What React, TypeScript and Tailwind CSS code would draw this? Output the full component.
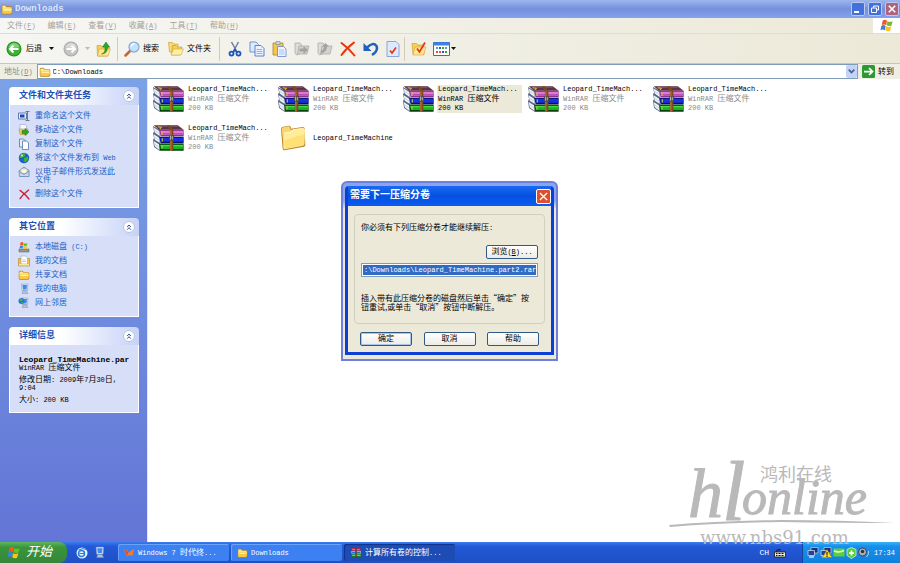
import React, { ReactNode } from 'react';

const LATIN = /([\x20-\x7e]+)/;

/** Mixed-script label: Latin runs are set one pixel smaller than the Han runs. */
function Mix({ text }: { text: string }) {
  return (
    <>
      {text.split(LATIN).map((part, i) =>
        i % 2 ? (
          <span key={i} className="text-[7px]">
            {part}
          </span>
        ) : (
          part
        ),
      )}
    </>
  );
}

function Key({ text, letter }: { text: string; letter: string }) {
  return (
    <>
      {text}
      <span className="text-[7px]">
        (<u>{letter}</u>)
      </span>
    </>
  );
}

function Svg({ box, className, children }: { box: string; className: string; children: ReactNode }) {
  return (
    <svg viewBox={box} className={`block shrink-0 ${className}`} aria-hidden="true" preserveAspectRatio="none">
      {children}
    </svg>
  );
}

function Folder({ className }: { className: string }) {
  return (
    <Svg box="0 0 32 28" className={className}>
      <path d="M2 5 Q2 2 5 2 H12 L16 6 H27 Q30 6 30 9 V24 L27 27 H4 L2 24Z" fill="#b98216" />
      <path d="M3.500 6 Q3.500 4 5 4 H11 L15 8 H28 V23 H4Z" fill="#ffe58e" />
      <path d="M7 12 H30 L26 25 H4Z" fill="#fbc93f" />
      <path d="M8 13 H28 L27 17 H7Z" fill="#ffefa8" />
    </Svg>
  );
}

function BigFolder() {
  return (
    <Svg box="0 0 78 78" className="h-[26px] w-[26px]">
      <path d="M3 12 Q3 6 9 5 L27 2 Q31 2 32 6 L34 11 L68 6 Q74 6 74 11 L76 60 Q76 64 72 65 L14 76 Q9 76 8 71Z" fill="#b9862b" />
      <path d="M5 13 Q5 8 10 7 L26 4 Q29 4 30 8 L32 14 L67 8 Q72 8 72 13 L73 58 L12 70Z" fill="#fbd56c" />
      <path d="M12 24 L34 21 L40 14 L71 11 Q75 11 75 15 L73 57 Q73 61 69 62 L14 73 Q10 73 10 69Z" fill="#ffec96" />
      <path d="M14 46 L73 28 L72 56 Q72 60 68 61 L14 72Z" fill="#ffdb68" opacity="0.7" />
      <path d="M12 24 L34 21 L40 14 L71 11" fill="none" stroke="#fff9d6" strokeWidth="3" />
    </Svg>
  );
}

function Archive({ className }: { className: string }) {
  return (
    <Svg box="0 0 90 76" className={className}>
      <path d="M0 3 L20 14 V76 L3 64 L0 44 L3 38 L0 24 L3 19Z" fill="#5b6680" />
      <path d="M2 7 L19 18 V32 L5 22Z M2 27 L19 38 V52 L5 43Z M2 47 L19 58 V73 L5 62Z" fill="#eef2fa" />
      <path d="M4 15 L19 25 M4 35 L19 45 M4 55 L19 65" stroke="#b9c6da" strokeWidth="2" />
      <path d="M2 1 H72 L89 14 H18Z" fill="#5d3244" />
      <path d="M8 2 H70 L74 5 H14Z" fill="#82576a" />
      <path d="M18 14 H89 V33 H22Z" fill="#7a2a75" />
      <path d="M21 17 H88 V25 H23Z" fill="#e177d8" />
      <path d="M21 25 H88 V30 H23Z" fill="#c255b9" />
      <path d="M18 34 H89 V53 H22Z" fill="#07106a" />
      <path d="M21 37 H88 V49 H23Z" fill="#1632e0" />
      <path d="M18 54 H89 V75 H20Z" fill="#06400c" />
      <path d="M21 58 H88 V70 H23Z" fill="#16b51c" />
      <path d="M21 59 H88 V62 H23Z" fill="#5ce055" />
      <path d="M26 18 V29 M27 39 V48 M26 60 V69" stroke="#d8c63c" strokeWidth="3" />
      <path d="M40 1 H48 L59 14 V75 H49 V14Z" fill="#7e4a1d" />
      <path d="M52 15 V75" stroke="#b98142" strokeWidth="3" />
      <rect x="47" y="29" width="14" height="17" rx="4" fill="#4f4a44" />
      <path d="M51 31 V43 M56 32 V42" stroke="#e8e4d8" strokeWidth="2" />
      <path d="M14 5 L24 7 L20 11" stroke="#d9bb35" strokeWidth="3" fill="none" />
    </Svg>
  );
}

function SmallArchive() {
  return (
    <Svg box="0 0 24 24" className="h-[11px] w-3">
      <path d="M2 2 L18 1 L22 5 V8 H4Z" fill="#a32a5c" />
      <path d="M4 4 L20 5 V7 H5Z" fill="#f06a8a" />
      <path d="M2 9 H22 V14 H3Z" fill="#d9d43a" />
      <path d="M3 11 H21 V13 H4Z" fill="#2d6be0" />
      <path d="M2 15 H22 V22 H3Z" fill="#1b7a34" />
      <path d="M4 17 H21 V19 H5Z" fill="#7de3b0" />
      <path d="M12 1 V22" stroke="#6b3c18" strokeWidth="3" />
    </Svg>
  );
}

function Flag({ className }: { className: string }) {
  return (
    <Svg box="0 0 32 30" className={className}>
      <path d="M6 4 Q11 0 16 4 L14 14 Q9 11 4 14Z" fill="#ee5a24" />
      <path d="M17 5 Q22 8 29 5 L26 15 Q20 18 15 14Z" fill="#6fbd2b" />
      <path d="M3 16 Q8 12 13 16 L11 26 Q6 23 1 26Z" fill="#3a80e6" />
      <path d="M14 17 Q20 20 26 17 L23 27 Q17 30 12 26Z" fill="#fbc31c" />
    </Svg>
  );
}

function Arrow({ tone }: { tone: 'dark' | 'light' }) {
  return (
    <Svg box="0 0 6 4" className="h-[3px] w-[5px]">
      <path d="M0 0 H6 L3 4Z" fill={tone === 'dark' ? '#111' : '#bdbab0'} />
    </Svg>
  );
}

function RoundArrow({ kind }: { kind: 'back' | 'forward' }) {
  const back = kind === 'back';
  return (
    <Svg box="0 0 32 32" className="h-4 w-4">
      <circle cx="16" cy="16" r="15" fill={back ? '#238c1e' : '#a9a9a9'} />
      <circle cx="16" cy="16" r="13" fill={back ? '#3db534' : '#c4c4c4'} />
      <path d="M5 12 Q10 3 16 4 Q23 3 27 12 Q16 16 5 12Z" fill="#fff" opacity="0.35" />
      <path
        d={back ? 'M25 16 H9 M15 9 L8 16 L15 23' : 'M7 16 H23 M17 9 L24 16 L17 23'}
        fill="none"
        stroke="#fff"
        strokeWidth="4"
      />
    </Svg>
  );
}

function Pages({ className }: { className: string }) {
  return (
    <Svg box="0 0 32 32" className={className}>
      <path d="M2 2 H14 L19 7 V22 H2Z" fill="#dfeafd" stroke="#6f93d8" strokeWidth="2" />
      <path d="M12 9 H24 L30 15 V30 H12Z" fill="#eef4ff" stroke="#5a82cf" strokeWidth="2" />
      <path d="M15 17 H26 M15 21 H27 M15 25 H27" stroke="#8fb0ea" strokeWidth="2" />
    </Svg>
  );
}

function GreyFolder({ twin }: { twin?: boolean }) {
  return (
    <Svg box="0 0 32 28" className="h-[14px] w-4">
      <path d="M2 2 H12 L15 6 V22 L5 26 L2 22Z" fill="#dcdcd8" stroke="#a9a9a6" strokeWidth="1.500" />
      <path d="M10 8 H30 L26 24 H7Z" fill="#d2d2ce" stroke="#a9a9a6" strokeWidth="1.500" />
      <path d={twin ? 'M8 17 Q14 15 14 9 H10 L17 2 L24 9 H20 Q20 20 8 23Z' : 'M11 13 H19 V8 L28 16 L19 24 V19 H11Z'} fill="#a3a3a0" />
    </Svg>
  );
}

function Cross({ color, className }: { color: string; className: string }) {
  return (
    <Svg box="0 0 32 32" className={className}>
      <path d="M3 4 Q17 14 29 29 M28 3 Q12 15 3 28" fill="none" stroke={color} strokeWidth="4" strokeLinecap="round" />
    </Svg>
  );
}

function Screen({ className, globe }: { className: string; globe?: boolean }) {
  return (
    <Svg box="0 0 24 24" className={className}>
      <path d="M7 2 H20 L19 15 H8Z" fill="#dbe5f5" stroke="#7d8fb5" />
      <path d="M9 4 H18 L17 13 H10Z" fill="#3c8cf0" />
      <path d="M10 16 H17 L20 21 H8Z" fill="#b9c4da" stroke="#7d8fb5" />
      {globe && (
        <>
          <circle cx="7" cy="8" r="6" fill="#2d74d8" />
          <path d="M3 4 Q7 2 10 5 L7 9 L4 8Z M7 11 L11 9 L8 14Z" fill="#45b545" />
        </>
      )}
    </Svg>
  );
}

function NetworkTray({ warning }: { warning?: boolean }) {
  return (
    <Svg box="0 0 24 22" className="h-[11px] w-3">
      <path d="M8 1 H22 V12 H8Z" fill="#1c2f74" stroke="#b9c8ea" strokeWidth="1.500" />
      <path d="M2 7 H15 V17 H2Z" fill="#27408f" stroke="#d3def5" strokeWidth="1.500" />
      <path d="M4 20 H14" stroke="#d3def5" strokeWidth="3" />
      {warning && (
        <>
          <path d="M14 5 L24 21 H5Z" fill="#ffdb2a" stroke="#8a7000" />
          <path d="M14 10 V16 M14 17 V20" stroke="#111" strokeWidth="2" />
        </>
      )}
    </Svg>
  );
}

function Globe() {
  return (
    <Svg box="0 0 24 24" className="h-3 w-3">
      <circle cx="12" cy="12" r="10.500" fill="#1d5fc4" />
      <path d="M4 6 Q10 1 16 3 L13 9 L7 12 L3 12Z M12 12 L20 9 L21 15 L15 21 L11 18Z" fill="#3fae3d" />
      <circle cx="8" cy="7" r="2" fill="#c9ecc4" />
    </Svg>
  );
}

function Divider() {
  return <span className="h-6 w-px shrink-0 bg-[#cfccba]" />;
}

function Chevron() {
  return (
    <button
      type="button"
      aria-label="折叠"
      className="flex h-3 w-3 items-center justify-center rounded-full border border-[#b7c5e8] bg-white"
    >
      <Svg box="0 0 10 12" className="h-2 w-[6px]">
        <path d="M2 6 L5 3 L8 6 M2 10 L5 7 L8 10" fill="none" stroke="#21409a" strokeWidth="1.500" />
      </Svg>
    </button>
  );
}

function Panel({ title, children }: { title: string; children: ReactNode }) {
  return (
    <section>
      <header className="flex h-[18px] items-center justify-between rounded-t-sm bg-gradient-to-r from-white from-40% to-[#c6d3f7] pr-1 pl-[10px]">
        <h2 className="text-[9px] font-bold text-[#1a50b8]">{title}</h2>
        <Chevron />
      </header>
      <div className="border border-t-0 border-white bg-[#d6dff7]">{children}</div>
    </section>
  );
}

function TaskLink({ icon, text }: { icon: ReactNode; text: string }) {
  return (
    <li>
      <a href="#" className="flex items-start gap-[5px] py-px leading-[8px] text-[#215dc6]">
        <span className="-my-px flex h-3 w-3 shrink-0 items-center justify-center">{icon}</span>
        <span className="py-px">
          <Mix text={text} />
        </span>
      </a>
    </li>
  );
}

function LinkList({ items }: { items: { text: string; icon: ReactNode }[] }) {
  return (
    <ul className="flex flex-col gap-[2px] pt-[5px] pr-4 pb-[7px] pl-2">
      {items.map((item) => (
        <TaskLink key={item.text} {...item} />
      ))}
    </ul>
  );
}

const tasks: { text: string; icon: ReactNode }[] = [
  {
    text: '重命名这个文件',
    icon: (
      <Svg box="0 0 24 20" className="h-[10px] w-3">
        <path d="M1 4 H17 V16 H1Z" fill="#e9eefa" stroke="#6479a6" strokeWidth="2" />
        <path d="M4 7 H13 V13 H4Z" fill="#1846b8" />
        <path d="M15 1 H23 M19 1 V19 M15 19 H23" stroke="#6b7690" strokeWidth="2" />
      </Svg>
    ),
  },
  {
    text: '移动这个文件',
    icon: (
      <Svg box="0 0 24 24" className="h-3 w-3">
        <path d="M4 1 H14 L17 5 V18 H4Z" fill="#f7f9ff" stroke="#8795b4" />
        <path d="M2 10 H20 L18 21 H4Z" fill="#f4d25c" stroke="#a88424" />
        <path d="M8 13 H14 V9 L22 16 L14 23 V19 H8Z" fill="#2fa32a" stroke="#17701a" />
      </Svg>
    ),
  },
  {
    text: '复制这个文件',
    icon: (
      <Svg box="0 0 24 24" className="h-3 w-3">
        <path d="M3 2 H11 L14 5 V18 H3Z" fill="#e8f1fc" stroke="#4a6d9c" strokeWidth="1.500" />
        <path d="M9 6 H17 L21 10 V23 H9Z" fill="#fbfdff" stroke="#4a6d9c" strokeWidth="1.500" />
      </Svg>
    ),
  },
  { text: '将这个文件发布到 Web', icon: <Globe /> },
  {
    text: '以电子邮件形式发送此文件',
    icon: (
      <Svg box="0 0 24 24" className="h-3 w-3">
        <path d="M2 10 L12 2 L22 9 V21 H3Z" fill="#c7daf5" stroke="#5c7cae" strokeWidth="1.500" />
        <path d="M6 6 H18 V15 H6Z" fill="#fff7df" stroke="#c0a86a" />
        <path d="M3 11 L12 17 L22 10" fill="none" stroke="#5c7cae" strokeWidth="1.500" />
      </Svg>
    ),
  },
  { text: '删除这个文件', icon: <Cross color="#cc1f35" className="h-[11px] w-[11px]" /> },
];

const places: { text: string; icon: ReactNode }[] = [
  {
    text: '本地磁盘 (C:)',
    icon: (
      <Svg box="0 0 24 24" className="h-3 w-3">
        <path d="M2 16 H22 V22 H2Z" fill="#8f9a8c" stroke="#566" />
        <path d="M5 3 Q9 1 11 4 L10 9 Q7 7 4 9Z" fill="#ee5a24" />
        <path d="M12 4 Q15 6 19 4 L18 9 Q14 11 11 9Z" fill="#6fbd2b" />
        <path d="M4 10 Q7 8 10 10 L9 15 Q6 13 3 15Z" fill="#3a80e6" />
        <path d="M11 10 Q14 12 18 10 L17 15 Q13 17 10 15Z" fill="#fbc31c" />
      </Svg>
    ),
  },
  {
    text: '我的文档',
    icon: (
      <Svg box="0 0 24 24" className="h-3 w-3">
        <path d="M1 7 H23 V22 H1Z" fill="#f1bf3c" stroke="#a47a18" />
        <path d="M6 2 H15 L19 6 V18 H6Z" fill="#fbfdff" stroke="#8795b4" />
        <path d="M8 10 H16 M8 13 H16" stroke="#8fa7d6" />
        <path d="M2 18 H22 V21 H2Z" fill="#ffe58e" />
      </Svg>
    ),
  },
  { text: '共享文档', icon: <Folder className="h-[10px] w-3" /> },
  { text: '我的电脑', icon: <Screen className="h-3 w-3" /> },
  { text: '网上邻居', icon: <Screen className="h-3 w-3" globe /> },
];

const menus = [
  ['文件', 'F'],
  ['编辑', 'E'],
  ['查看', 'V'],
  ['收藏', 'A'],
  ['工具', 'T'],
  ['帮助', 'H'],
];

const files = [
  { id: 1, selected: false },
  { id: 2, selected: false },
  { id: 3, selected: true },
  { id: 4, selected: false },
  { id: 5, selected: false },
  { id: 6, selected: false },
];

function TitleBar() {
  const control = 'flex h-[14px] w-[14px] items-center justify-center rounded-xs border border-[#b9c9f4]';
  return (
    <header className="flex h-[18px] items-center gap-px bg-gradient-to-b from-[#9db6ee] via-[#7490dc] to-[#84a2ee] px-px">
      <Folder className="h-[11px] w-3" />
      <h1 className="ml-px flex-1 text-[9px] font-bold text-[#dce6fb]">Downloads</h1>
      <div className="flex gap-[3px]">
        <button type="button" aria-label="最小化" className={`${control} bg-[#4470dc]`}>
          <span className="mt-[6px] mr-1 h-[2px] w-[5px] bg-white" />
        </button>
        <button type="button" aria-label="还原" className={`${control} bg-[#4470dc]`}>
          <Svg box="0 0 16 16" className="h-2 w-2">
            <path d="M5 5 V2 H15 V10 H11 M1 6 H11 V15 H1Z" fill="none" stroke="#fff" strokeWidth="2" />
          </Svg>
        </button>
        <button type="button" aria-label="关闭" className={`${control} bg-[#b0647c]`}>
          <Svg box="0 0 10 10" className="h-2 w-2">
            <path d="M1 1 L9 9 M9 1 L1 9" stroke="#fff" strokeWidth="2" />
          </Svg>
        </button>
      </div>
    </header>
  );
}

function MenuBar() {
  return (
    <nav className="flex h-4 items-stretch justify-between border-b border-[#e0ddcf] bg-gradient-to-r from-[#f6f6f4] to-[#ece9d8]">
      <ul className="flex items-center gap-3 pl-[7px] text-[#a5a294]">
        {menus.map(([text, letter]) => (
          <li key={letter}>
            <button type="button">
              <Key text={text} letter={letter} />
            </button>
          </li>
        ))}
      </ul>
      <div className="flex w-[27px] items-center justify-center bg-white">
        <Flag className="h-[13px] w-[14px]" />
      </div>
    </nav>
  );
}

function ToolBar() {
  return (
    <div
      role="toolbar"
      className="flex h-[30px] items-center border-b border-[#c9c6b6] bg-gradient-to-r from-[#f5f5f2] to-[#ece9d8] pl-[6px] text-black"
    >
      <button type="button" className="flex items-center gap-1">
        <RoundArrow kind="back" />
        后退
      </button>
      <button type="button" aria-label="后退列表" className="ml-[7px]">
        <Arrow tone="dark" />
      </button>
      <button type="button" aria-label="前进" className="ml-[9px]">
        <RoundArrow kind="forward" />
      </button>
      <button type="button" aria-label="前进列表" className="ml-[6px]">
        <Arrow tone="light" />
      </button>
      <button type="button" aria-label="向上" className="mx-[6px]">
        <Svg box="0 0 30 32" className="h-4 w-[15px]">
          <path d="M2 9 H10 L13 12 H27 L23 30 H3Z" fill="#f6cf55" stroke="#b58a1e" />
          <path d="M6 16 H29 L24 30 H3Z" fill="#ffe58e" stroke="#c59a2c" />
          <path d="M11 26 Q19 24 18 12 H13 L20 2 L27 12 H23 Q23 26 11 26Z" fill="#32a52d" stroke="#1a751c" />
        </Svg>
      </button>
      <Divider />
      <button type="button" className="mx-[6px] flex items-center gap-[3px]">
        <Svg box="0 0 32 32" className="h-4 w-4">
          <path d="M13 19 L3 29" stroke="#c9672a" strokeWidth="5" strokeLinecap="round" />
          <circle cx="20" cy="12" r="10" fill="#c4e2fb" stroke="#86a9d8" strokeWidth="2.500" />
          <path d="M14 11 Q15 6 21 5" stroke="#fff" strokeWidth="3" fill="none" />
        </Svg>
        搜索
      </button>
      <button type="button" className="mr-2 ml-[3px] flex items-center gap-[3px]">
        <Svg box="0 0 32 30" className="h-[15px] w-4">
          <path d="M1 3 H9 L12 6 H20 V22 H3Z" fill="#fbd971" stroke="#b98d23" />
          <path d="M9 9 H16 L19 12 H28 L24 28 H7Z" fill="#f6cf55" stroke="#b98d23" />
          <path d="M11 16 H31 L26 28 H6Z" fill="#ffefa8" stroke="#c59a2c" />
        </Svg>
        文件夹
      </button>
      <Divider />
      <div className="mx-1 flex items-center gap-[7px] pl-1">
        <button type="button" aria-label="剪切">
          <Svg box="0 0 28 32" className="h-4 w-[14px]">
            <path d="M7 2 L17 20 M21 2 L11 20" stroke="#6b7f9e" strokeWidth="3" />
            <circle cx="7" cy="25" r="4" fill="none" stroke="#1c55b8" strokeWidth="3.500" />
            <circle cx="21" cy="25" r="4" fill="none" stroke="#1c55b8" strokeWidth="3.500" />
            <path d="M11 22 L14 17 L17 22" fill="none" stroke="#1c55b8" strokeWidth="3" />
          </Svg>
        </button>
        <button type="button" aria-label="复制">
          <Pages className="h-4 w-4" />
        </button>
        <button type="button" aria-label="粘贴">
          <Svg box="0 0 30 32" className="h-4 w-[15px]">
            <path d="M2 4 H22 V28 H2Z" fill="#f3c74d" stroke="#a98127" strokeWidth="1.500" />
            <path d="M8 1 H16 V7 H8Z" fill="#cfd4de" stroke="#6d7585" />
            <path d="M11 11 H23 L28 16 V31 H11Z" fill="#eef4ff" stroke="#5a82cf" strokeWidth="1.500" />
            <path d="M14 18 H24 M14 22 H25 M14 26 H25" stroke="#8fb0ea" strokeWidth="1.500" />
          </Svg>
        </button>
        <button type="button" aria-label="移至">
          <GreyFolder />
        </button>
        <button type="button" aria-label="复制到">
          <GreyFolder twin />
        </button>
        <button type="button" aria-label="删除">
          <Cross color="#e8330c" className="h-4 w-4" />
        </button>
        <button type="button" aria-label="撤销">
          <Svg box="0 0 32 32" className="h-4 w-4">
            <path d="M8 13 Q20 1 27 10 Q31 20 18 28" fill="none" stroke="#1f5fc0" strokeWidth="5" />
            <path d="M1 4 V20 H17Z" fill="#1f5fc0" />
          </Svg>
        </button>
        <button type="button" aria-label="属性">
          <Svg box="0 0 28 32" className="h-4 w-[14px]">
            <path d="M2 1 H20 L26 7 V31 H2Z" fill="#dceaff" stroke="#6c8fd0" strokeWidth="1.500" />
            <path d="M8 19 L12 24 L20 13" fill="none" stroke="#e5391a" strokeWidth="3.500" />
          </Svg>
        </button>
      </div>
      <Divider />
      <button type="button" aria-label="文件夹选项" className="ml-[6px]">
        <Svg box="0 0 32 30" className="h-[15px] w-4">
          <path d="M2 5 H11 L14 8 H26 V27 H4Z" fill="#f6cf55" stroke="#b98d23" />
          <path d="M8 12 H30 L25 28 H4Z" fill="#ffe58e" stroke="#c59a2c" />
          <path d="M12 15 L17 22 L28 3" fill="none" stroke="#e5391a" strokeWidth="3.500" />
        </Svg>
      </button>
      <button type="button" aria-label="查看" className="ml-[6px] flex items-center gap-px">
        <Svg box="0 0 34 28" className="h-[14px] w-[17px]">
          <path d="M1 1 H33 V27 H1Z" fill="#fff" stroke="#2f6fd0" strokeWidth="2" />
          <path d="M1 1 H33 V7 H1Z" fill="#3d83e6" />
          <path d="M6 12 H10 M24 12 H28" stroke="#6a8fd0" strokeWidth="4" />
          <path d="M12 12 H16 M18 20 H22" stroke="#2456c4" strokeWidth="4" />
          <path d="M18 12 H22 M24 20 H28" stroke="#36a336" strokeWidth="4" />
          <path d="M6 20 H10 M12 20 H16" stroke="#e0523a" strokeWidth="4" />
        </Svg>
        <Arrow tone="dark" />
      </button>
    </div>
  );
}

function AddressBar() {
  return (
    <form className="flex h-[15px] items-center bg-[#efeee4]" onSubmit={(e) => e.preventDefault()}>
      <label htmlFor="address" className="pr-1 pl-1 text-[#8c897c]">
        <Key text="地址" letter="D" />
      </label>
      <div className="flex h-[15px] min-w-0 flex-1 items-center border border-[#7f9db9] bg-white pl-px">
        <Folder className="h-[10px] w-3" />
        <input
          id="address"
          defaultValue="C:\Downloads"
          className="min-w-0 flex-1 bg-transparent pl-[2px] text-[7px] text-black outline-none"
        />
        <button
          type="button"
          aria-label="地址列表"
          className="flex h-[13px] w-[11px] items-center justify-center rounded-xs bg-[#c3d3fb]"
        >
          <Svg box="0 0 10 7" className="h-[5px] w-[7px]">
            <path d="M1 1 L5 5 L9 1" fill="none" stroke="#4d6185" strokeWidth="2.500" />
          </Svg>
        </button>
      </div>
      <button type="submit" className="ml-1 flex items-center gap-[3px] pr-[6px] text-black">
        <Svg box="0 0 26 26" className="h-[13px] w-[13px]">
          <rect width="26" height="26" rx="3" fill="#2c9a32" />
          <path d="M4 13 H20 M14 6 L21 13 L14 20" fill="none" stroke="#fff" strokeWidth="3.500" />
        </Svg>
        转到
      </button>
    </form>
  );
}

function Sidebar() {
  return (
    <aside className="w-[148px] shrink-0 border-r border-[#dfe6fa] bg-gradient-to-b from-[#7ba2e7] to-[#6375d6] pt-2 pr-2 pl-[9px]">
      <div className="flex flex-col gap-[10px]">
        <Panel title="文件和文件夹任务">
          <LinkList items={tasks} />
        </Panel>
        <Panel title="其它位置">
          <LinkList items={places} />
        </Panel>
        <Panel title="详细信息">
          <div className="flex flex-col gap-1 px-[9px] pt-[11px] pb-2 leading-[8px] text-black">
            <div>
              <p className="overflow-hidden text-[8px] font-bold whitespace-nowrap">Leopard_TimeMachine.par</p>
              <p>
                <Mix text="WinRAR 压缩文件" />
              </p>
            </div>
            <p>
              <Mix text="修改日期: 2009年7月30日, 9:04" />
            </p>
            <p>
              <Mix text="大小: 200 KB" />
            </p>
          </div>
        </Panel>
      </div>
    </aside>
  );
}

function FileList() {
  return (
    <ul className="grid flex-1 auto-rows-[39px] grid-cols-[repeat(auto-fill,125px)] content-start bg-white pl-1">
      {files.map((f) => (
        <li key={f.id} className="flex items-center gap-[3px] pl-px">
          <Archive className="h-[26px] w-[31px]" />
          <div className={`pr-1 pl-px leading-[9px] ${f.selected ? 'bg-[#ece9d8] text-black' : 'text-[#8a8a8a]'}`}>
            <p className="text-[7px] text-black">Leopard_TimeMach...</p>
            <p>
              <Mix text="WinRAR 压缩文件" />
            </p>
            <p className="text-[7px]">200 KB</p>
          </div>
        </li>
      ))}
      <li className="flex items-center gap-[7px] pl-[3px] text-[7px] text-black">
        <BigFolder />
        <p>Leopard_TimeMachine</p>
      </li>
    </ul>
  );
}

function DialogButton({ children, primary }: { children: ReactNode; primary?: boolean }) {
  return (
    <button
      type="button"
      className={`h-[14px] w-[52px] rounded-xs border border-[#2f5a86] bg-gradient-to-b from-white to-[#ecebe5] leading-[12px] ${
        primary ? 'shadow-[inset_0_0_0_1px_#a9c3ee]' : ''
      }`}
    >
      {children}
    </button>
  );
}

function VolumeDialog() {
  return (
    <div className="absolute top-[181px] left-[341px] w-[217px] rounded-t-md border-2 border-[#6f7fdd] bg-gradient-to-b from-[#8ca4ea] from-10% to-[#ece9d8] to-15% px-[2px] pt-[3px] pb-1">
      <div
        role="dialog"
        aria-labelledby="dialog-title"
        className="rounded-t-sm border-x-[3px] border-b-[3px] border-[#0c3fd6] bg-[#ece9d8] text-black"
      >
        <header className="flex h-5 items-center justify-between bg-gradient-to-b from-[#1b6af2] via-[#0550e0] to-[#0a5cf5] pl-[2px]">
          <h2 id="dialog-title" className="text-[10px] font-bold text-white">
            需要下一压缩分卷
          </h2>
          <button
            type="button"
            aria-label="关闭"
            className="flex h-[15px] w-[15px] items-center justify-center rounded-xs border border-white bg-[#dd4f2c]"
          >
            <Svg box="0 0 10 10" className="h-[9px] w-[9px]">
              <path d="M1 1 L9 9 M9 1 L1 9" stroke="#fff" strokeWidth="1.500" />
            </Svg>
          </button>
        </header>
        <div className="px-[6px] pt-2 pb-[6px]">
          <div className="rounded-sm border border-[#d0d0bf] px-[6px] pt-2 pb-3">
            <label htmlFor="volume" className="block leading-[10px]">
              <Mix text="你必须有下列压缩分卷才能继续解压:" />
            </label>
            <div className="mt-3 flex justify-end">
              <DialogButton>
                <Key text="浏览" letter="B" />
                <span className="text-[7px]">...</span>
              </DialogButton>
            </div>
            <div className="mt-1 border border-[#7f9db9] bg-white p-px">
              <input
                id="volume"
                defaultValue=":\Downloads\Leopard_TimeMachine.part2.rar"
                className="block h-[10px] w-full bg-[#316ac5] pl-px text-[7px] text-white outline-none"
              />
            </div>
            <p className="mt-4 pr-2 font-['Noto_Sans_CJK_SC',sans-serif] leading-[9px]">
              插入带有此压缩分卷的磁盘然后单击“确定”按钮重试,或单击“取消”按钮中断解压。
            </p>
          </div>
          <div className="mt-2 flex justify-between px-[6px]">
            <DialogButton primary>确定</DialogButton>
            <DialogButton>取消</DialogButton>
            <DialogButton>帮助</DialogButton>
          </div>
        </div>
      </div>
    </div>
  );
}

function Watermark() {
  return (
    <svg viewBox="0 0 240 113" className="pointer-events-none absolute right-0 bottom-0 h-[113px] w-[240px]" fill="#b9b9b9">
      <g fontStyle="italic" fontFamily="Liberation Serif, serif" stroke="#b9b9b9">
        <text x="28" y="67" fontSize="70">
          h
        </text>
        <text x="62" y="70" fontSize="84">
          l
        </text>
        <text x="82" y="64" fontSize="50">
          online
        </text>
      </g>
      <path d="M9 75 Q60 71 120 70 Q180 70 234 73 Q180 73 120 72 Q60 73 10 77Z" />
      <text x="100" y="31" fontSize="18" fontFamily="Noto Sans CJK SC, sans-serif">
        鸿利在线
      </text>
      <text x="40" y="94" fontSize="18" fontFamily="DejaVu Serif, serif">
        www.nbs91.com
      </text>
    </svg>
  );
}

function TaskButton({ icon, text, active }: { icon: ReactNode; text: string; active?: boolean }) {
  return (
    <button
      type="button"
      className={`flex h-[17px] w-[111px] min-w-0 items-center gap-[3px] rounded-xs pl-[6px] text-white ${
        active ? 'bg-[#1c4cb4] shadow-[inset_1px_1px_1px_#10348c]' : 'bg-[#3c80f2] shadow-[inset_1px_1px_0_#6ba2fa]'
      }`}
    >
      {icon}
      <span className="whitespace-nowrap">
        <Mix text={text} />
      </span>
    </button>
  );
}

function TaskBar() {
  return (
    <footer className="flex h-[21px] items-center bg-gradient-to-b from-[#3c7df0] via-[#2359d8] via-20% to-[#1e4fc4]">
      <button
        type="button"
        className="flex h-full w-[67px] items-center gap-[5px] rounded-r-lg bg-gradient-to-b from-[#5fb65c] via-[#3a953a] via-25% to-[#36863a] pl-[7px] text-[13px] text-white italic"
      >
        <Flag className="h-[13px] w-[14px]" />
        开始
      </button>
      <div className="ml-[9px] flex gap-1">
        <button type="button" aria-label="浏览器">
          <Svg box="0 0 24 24" className="h-3 w-3">
            <circle cx="12" cy="12" r="11" fill="#e6f2fd" />
            <circle cx="11" cy="13" r="6" fill="none" stroke="#2a80d8" strokeWidth="3" />
            <path d="M7 13 H17 M5 6 Q15 0 22 6" stroke="#2a80d8" strokeWidth="2" fill="none" />
          </Svg>
        </button>
        <button type="button" aria-label="显示桌面">
          <Screen className="h-[13px] w-[14px]" />
        </button>
      </div>
      <div className="ml-3 flex gap-[2px]">
        <TaskButton
          text="Windows 7 时代终..."
          icon={
            <Svg box="0 0 20 16" className="h-2 w-[11px]">
              <path d="M0 1 L6 3 L9 8 L12 4 L19 0 L15 14 L10 12 L5 15Z" fill="#f8782e" />
              <path d="M1 1 L7 6 L6 14Z" fill="#d8402b" />
            </Svg>
          }
        />
        <TaskButton text="Downloads" icon={<Folder className="h-[10px] w-[11px]" />} />
        <TaskButton active text="计算所有卷的控制..." icon={<SmallArchive />} />
      </div>
      <div className="ml-auto flex items-center gap-[5px] pr-4 text-[8px] text-white">
        CH
        <Svg box="0 0 24 20" className="h-[10px] w-3">
          <path d="M5 7 Q5 2 14 4" stroke="#111" strokeWidth="2" fill="none" />
          <path d="M1 8 H23 V18 H1Z" fill="#e8e8e0" stroke="#111" strokeWidth="1.500" />
          <path d="M4 11 H20 M4 15 H20" stroke="#111" strokeWidth="2" strokeDasharray="2 1" />
        </Svg>
      </div>
      <div className="flex h-full w-[98px] items-center gap-px border-l border-[#0f47a0] bg-gradient-to-b from-[#3bb2f8] via-[#1590ec] via-20% to-[#1180dc] pl-1 text-[7px] text-white">
        <NetworkTray />
        <NetworkTray warning />
        <Svg box="0 0 24 18" className="h-[9px] w-3">
          <path d="M1 1 H23 V17 H1Z" fill="#5fcf3a" />
          <path d="M2 6 Q12 10 22 5" stroke="#eaffdf" strokeWidth="3" fill="none" />
        </Svg>
        <Svg box="0 0 22 24" className="h-3 w-[11px]">
          <path d="M11 1 L20 5 V17 L11 23 L2 17 V5Z" fill="#56cc3a" stroke="#d9ffcb" strokeWidth="1.500" />
          <path d="M11 7 V17 M6 12 H16" stroke="#fff" strokeWidth="3.500" />
        </Svg>
        <Svg box="0 0 24 22" className="h-[11px] w-3">
          <circle cx="9" cy="10" r="8" fill="#aab0bd" stroke="#3a4356" strokeWidth="2" />
          <circle cx="9" cy="9" r="3.500" fill="#2b3448" />
          <path d="M17 20 Q22 15 21 8" stroke="#b9d4f8" strokeWidth="2" fill="none" />
        </Svg>
        <time className="ml-[3px]">17:34</time>
      </div>
    </footer>
  );
}

export default function App() {
  return (
    <div className="relative flex min-h-screen flex-col overflow-hidden bg-white font-['Liberation_Mono','Noto_Sans_CJK_SC',monospace] text-[8px] leading-[10px]">
      <TitleBar />
      <MenuBar />
      <ToolBar />
      <AddressBar />
      <main className="flex flex-1">
        <Sidebar />
        <FileList />
      </main>
      <TaskBar />
      <VolumeDialog />
      <Watermark />
    </div>
  );
}
